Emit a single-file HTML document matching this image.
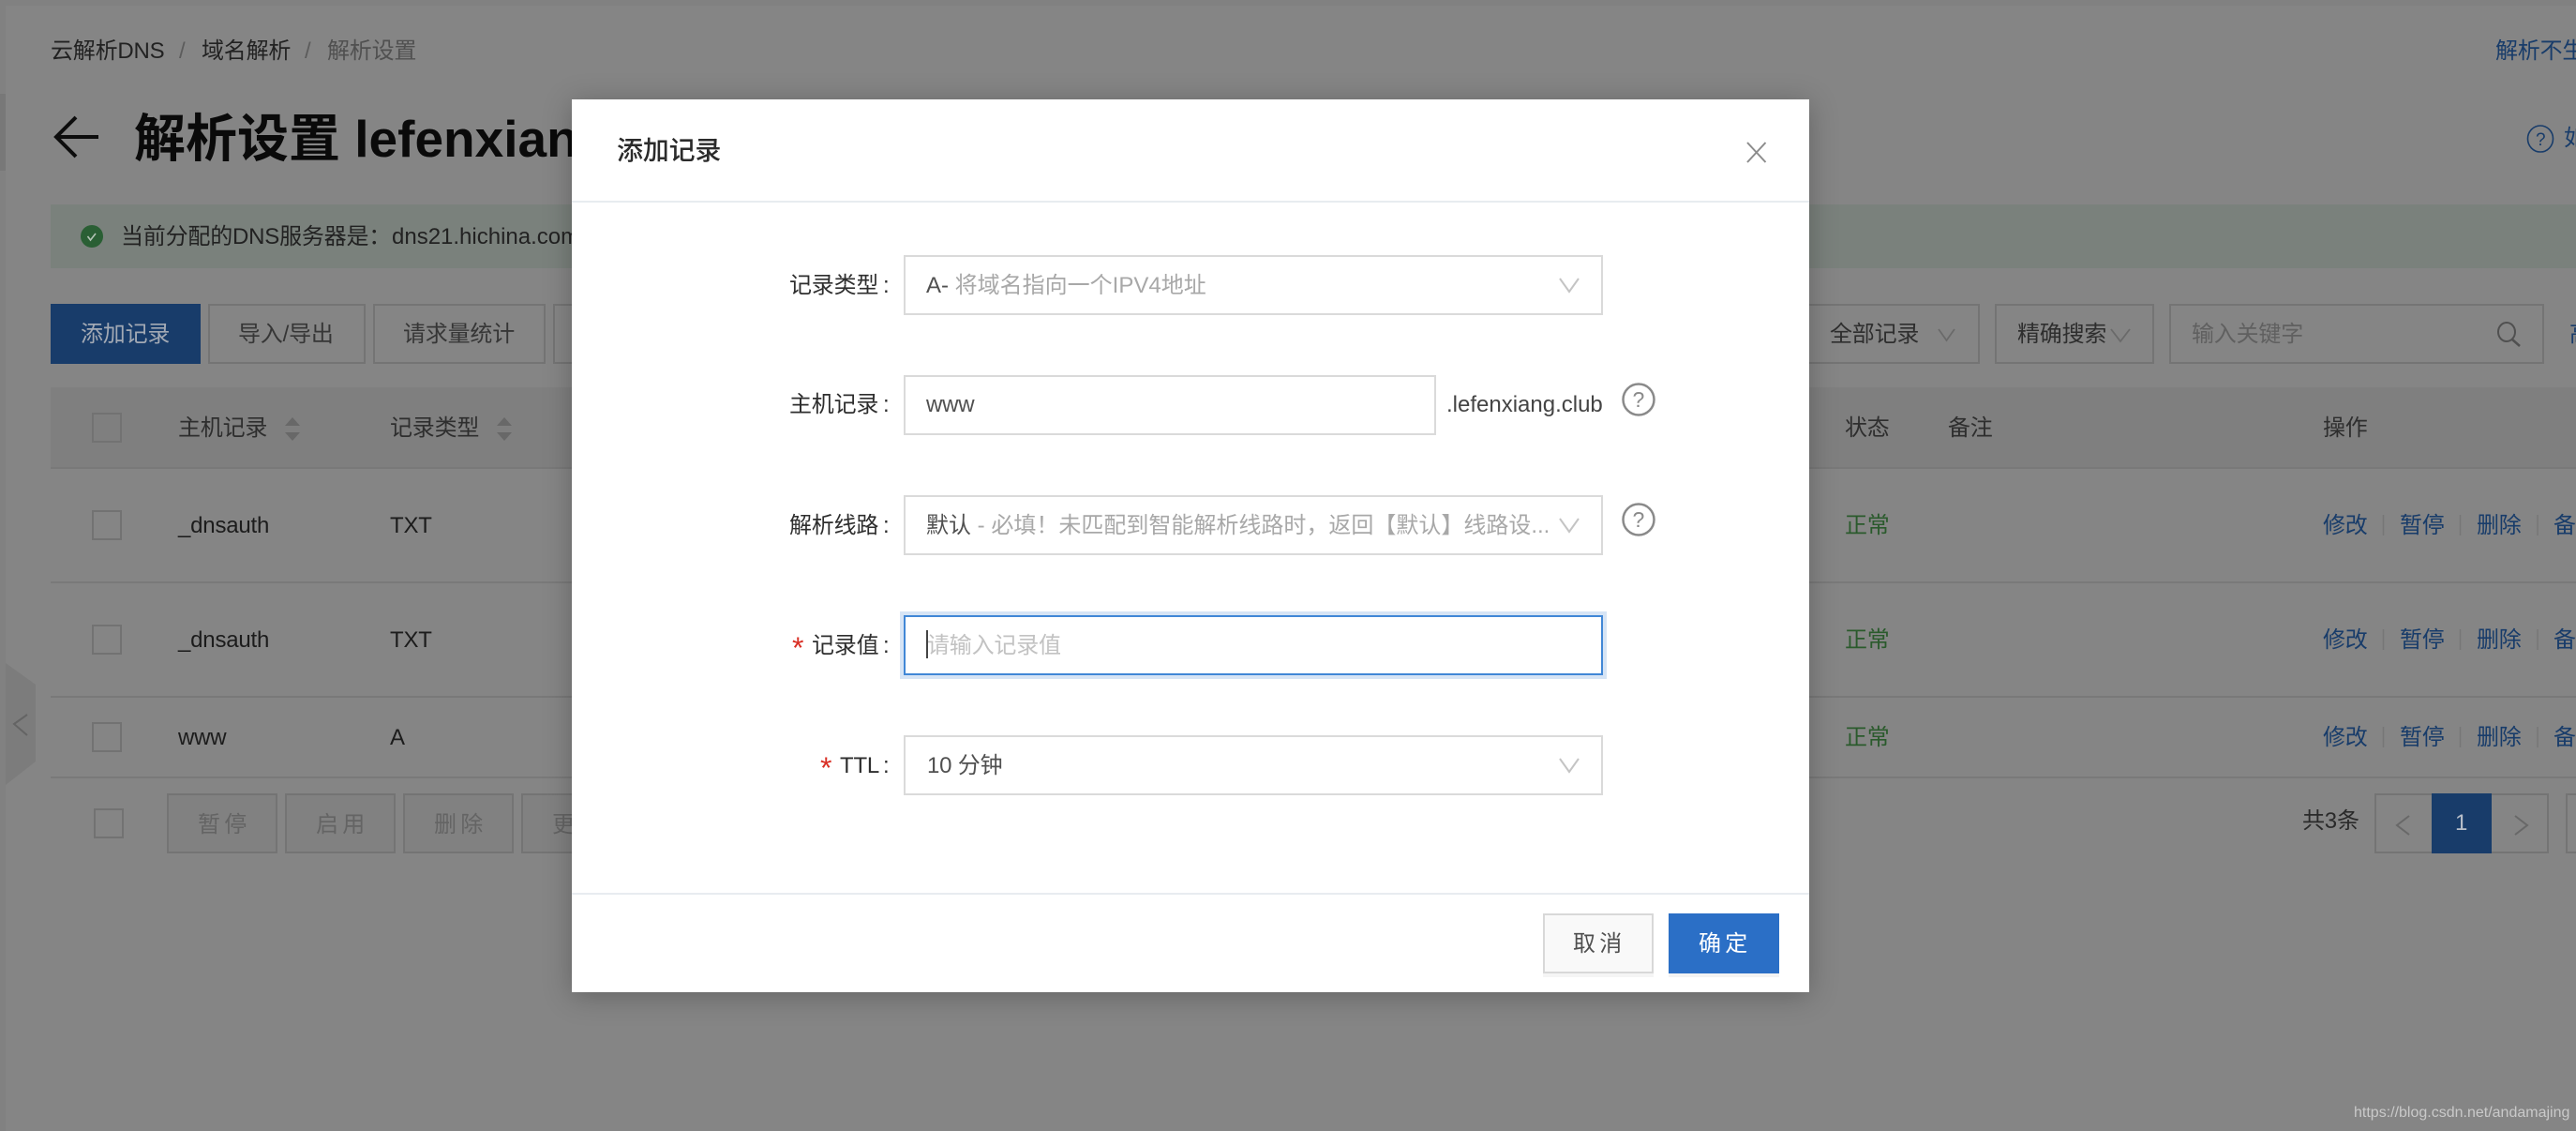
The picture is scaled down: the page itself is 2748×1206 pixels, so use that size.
<!DOCTYPE html>
<html lang="zh-CN">
<head>
<meta charset="utf-8">
<title>添加记录</title>
<style>
html,body{margin:0;padding:0;width:2748px;height:1206px;overflow:hidden;background:#858585;}
body{position:relative;font-family:"Liberation Sans","Noto Sans CJK SC",sans-serif;font-size:24px;color:#1f1f1f;}
.b{position:absolute;box-sizing:border-box;}
.t{position:absolute;white-space:nowrap;line-height:40px;height:40px;margin-top:2px;letter-spacing:-.2px;}
.btn{border:2px solid #747474;}
.cb{border:2px solid #727272;width:32px;height:32px;}
.line{position:absolute;left:54px;width:2694px;height:2px;background:#797979;}
.g{color:#2a5a2c}
.l{color:#183c6a}
.m{border:2px solid #dadada;background:#fff;height:64px;}
.gr{color:#a8a8a8}
.dk{color:#505050}
.lab{color:#2e2e2e}
.star{color:#d93026;font-size:32px}
.z{letter-spacing:0}
svg{position:absolute;left:0;top:0;}
</style>
</head>
<body>
<!-- page chrome -->
<div class="b" style="left:0;top:0;width:2748px;height:6px;background:#818181"></div>
<div class="b" style="left:0;top:0;width:6px;height:1206px;background:#818181"></div>
<div class="b" style="left:0;top:100px;width:6px;height:82px;background:#787878"></div>

<!-- breadcrumb -->
<div class="t" style="left:54px;top:33px;color:#222">云解析DNS</div>
<div class="t" style="left:191px;top:33px;color:#5c5c5c">/</div>
<div class="t" style="left:215px;top:33px;color:#222">域名解析</div>
<div class="t" style="left:325px;top:33px;color:#5c5c5c">/</div>
<div class="t" style="left:349px;top:33px;color:#505050">解析设置</div>
<div class="t l" style="left:2662px;top:33px">解析不生效</div>

<!-- title -->
<div class="t z" style="left:143px;top:114px;height:64px;line-height:64px;font-size:55px;font-weight:700;color:#0a0a0a">解析设置 lefenxiang.club</div>
<div class="t l" style="left:2735px;top:126px">如何设置</div>

<!-- alert -->
<div class="b" style="left:54px;top:218px;width:2694px;height:68px;background:#7a817c"></div>
<div class="t" style="left:129px;top:231px;color:#222">当前分配的DNS服务器是：</div>
<div class="t z" style="left:418px;top:231px;color:#222">dns21.hichina.com</div>

<!-- toolbar -->
<div class="b" style="left:54px;top:324px;width:160px;height:64px;background:#183c6a"></div>
<div class="t" style="left:86px;top:335px;color:#a2a9b4">添加记录</div>
<div class="b btn" style="left:222px;top:324px;width:168px;height:64px"></div>
<div class="t" style="left:254px;top:335px;color:#363636">导入/导出</div>
<div class="b btn" style="left:398px;top:324px;width:184px;height:64px"></div>
<div class="t" style="left:430px;top:335px;color:#363636">请求量统计</div>
<div class="b btn" style="left:590px;top:324px;width:120px;height:64px"></div>

<div class="b btn" style="left:1900px;top:324px;width:212px;height:64px"></div>
<div class="t" style="left:1952px;top:335px;color:#2e2e2e">全部记录</div>
<div class="b btn" style="left:2128px;top:324px;width:170px;height:64px"></div>
<div class="t" style="left:2152px;top:335px;color:#2e2e2e">精确搜索</div>
<div class="b btn" style="left:2314px;top:324px;width:400px;height:64px"></div>
<div class="t" style="left:2338px;top:335px;color:#606060">输入关键字</div>
<div class="t l" style="left:2741px;top:335px">高级</div>

<!-- table -->
<div class="b" style="left:54px;top:413px;width:2694px;height:86px;background:#7f7f7f"></div>
<div class="line" style="top:498px"></div>
<div class="line" style="top:620px"></div>
<div class="line" style="top:742px"></div>
<div class="line" style="top:828px"></div>

<div class="b cb" style="left:98px;top:440px"></div>
<div class="t" style="left:190px;top:435px;color:#2e2e2e">主机记录</div>
<div class="t" style="left:416px;top:435px;color:#2e2e2e">记录类型</div>
<div class="t" style="left:1968px;top:435px;color:#2e2e2e">状态</div>
<div class="t" style="left:2078px;top:435px;color:#2e2e2e">备注</div>
<div class="t" style="left:2478px;top:435px;color:#2e2e2e">操作</div>

<div class="b cb" style="left:98px;top:544px"></div>
<div class="t" style="left:190px;top:539px;color:#1c1c1c">_dnsauth</div>
<div class="t" style="left:416px;top:539px;color:#1c1c1c">TXT</div>
<div class="t g" style="left:1968px;top:539px">正常</div>
<div class="t l" style="left:2478px;top:539px">修改</div>
<div class="t l" style="left:2560px;top:539px">暂停</div>
<div class="t l" style="left:2642px;top:539px">删除</div>
<div class="t l" style="left:2724px;top:539px">备注</div>

<div class="b cb" style="left:98px;top:666px"></div>
<div class="t" style="left:190px;top:661px;color:#1c1c1c">_dnsauth</div>
<div class="t" style="left:416px;top:661px;color:#1c1c1c">TXT</div>
<div class="t g" style="left:1968px;top:661px">正常</div>
<div class="t l" style="left:2478px;top:661px">修改</div>
<div class="t l" style="left:2560px;top:661px">暂停</div>
<div class="t l" style="left:2642px;top:661px">删除</div>
<div class="t l" style="left:2724px;top:661px">备注</div>

<div class="b cb" style="left:98px;top:770px"></div>
<div class="t" style="left:190px;top:765px;color:#1c1c1c">www</div>
<div class="t" style="left:416px;top:765px;color:#1c1c1c">A</div>
<div class="t g" style="left:1968px;top:765px">正常</div>
<div class="t l" style="left:2478px;top:765px">修改</div>
<div class="t l" style="left:2560px;top:765px">暂停</div>
<div class="t l" style="left:2642px;top:765px">删除</div>
<div class="t l" style="left:2724px;top:765px">备注</div>

<!-- table footer -->
<div class="b cb" style="left:100px;top:862px"></div>
<div class="b btn" style="left:178px;top:846px;width:118px;height:64px;background:#818181"></div>
<div class="t" style="left:211px;top:858px;color:#646464;word-spacing:-2px">暂 停</div>
<div class="b btn" style="left:304px;top:846px;width:118px;height:64px;background:#818181"></div>
<div class="t" style="left:337px;top:858px;color:#646464;word-spacing:-2px">启 用</div>
<div class="b btn" style="left:430px;top:846px;width:118px;height:64px;background:#818181"></div>
<div class="t" style="left:463px;top:858px;color:#646464;word-spacing:-2px">删 除</div>
<div class="b btn" style="left:556px;top:846px;width:118px;height:64px;background:#818181"></div>
<div class="t" style="left:589px;top:858px;color:#646464">更</div>

<div class="t" style="left:2456px;top:854px;color:#2a2a2a;font-size:24px">共3条</div>
<div class="b btn" style="left:2533px;top:846px;width:186px;height:64px"></div>
<div class="b" style="left:2594px;top:846px;width:64px;height:64px;background:#183c6a"></div>
<div class="t" style="left:2619px;top:856px;color:#b8bfca">1</div>
<div class="b btn" style="left:2737px;top:846px;width:60px;height:64px"></div>

<!-- page icons -->
<svg width="2748" height="1206" viewBox="0 0 2748 1206" fill="none">
  <path d="M105 146H61M81 125L60 146 81 167" stroke="#0d0d0d" stroke-width="4" fill="none"/>
  <circle cx="98" cy="252" r="12" fill="#2a5f34"/>
  <path d="M93.500 252l3 4 5.500-7" stroke="#b4c4b6" stroke-width="1.600"/>
  <path d="M304 454l8-9 8 9zM304 461l8 9 8-9z" fill="#686868"/>
  <path d="M530 454l8-9 8 9zM530 461l8 9 8-9z" fill="#686868"/>
  <path d="M2068 351l8.500 12 8.500-12M2252 351l10 13 10-13" stroke="#6a6a6a" stroke-width="1.800"/>
  <ellipse cx="2674" cy="354" rx="9" ry="10" stroke="#505050" stroke-width="2"/>
  <path d="M2680 362l8 7" stroke="#505050" stroke-width="2.500"/>
  <ellipse cx="2710" cy="148" rx="13.500" ry="14" stroke="#183c6a" stroke-width="1.600"/>
  <text x="2705" y="155" font-size="19" fill="#183c6a" font-family="Liberation Sans">?</text>
  <path d="M6 707L38 730V812L6 837Z" fill="#7c7c7c"/>
  <path d="M29 762L15 772 29 784" stroke="#646464" stroke-width="2"/>
  <path d="M2570 870l-13 10 13 10M2683 870l13 10-13 10" stroke="#686868" stroke-width="2"/>
  <path d="M2542.500 549v22M2624.500 549v22M2707 549v22M2542.500 671v22M2624.500 671v22M2707 671v22M2542.500 775v22M2624.500 775v22M2707 775v22" stroke="#767676" stroke-width="1.500"/>
</svg>

<!-- watermark -->
<div class="t z" style="left:2511px;top:1165px;font-size:16px;color:#c9c9c9">https://blog.csdn.net/andamajing</div>

<!-- modal -->
<div class="b" style="left:610px;top:106px;width:1320px;height:952px;background:#fff;box-shadow:0 4px 28px rgba(0,0,0,.26)"></div>
<div class="b" style="left:610px;top:214px;width:1320px;height:2px;background:#e8ecf0"></div>
<div class="b" style="left:610px;top:952px;width:1320px;height:2px;background:#e8ecf0"></div>
<div class="t" style="left:658px;top:139px;font-size:28px;font-weight:500;color:#2b2b2b">添加记录</div>

<!-- row 1 -->
<div class="t lab" style="left:842px;top:283px">记录类型</div>
<div class="t lab" style="left:942px;top:283px">:</div>
<div class="b m" style="left:964px;top:272px;width:746px"></div>
<div class="t z" style="left:988px;top:283px"><span class="dk">A- </span><span class="gr">将域名指向一个IPV4地址</span></div>

<!-- row 2 -->
<div class="t lab" style="left:842px;top:410px">主机记录</div>
<div class="t lab" style="left:942px;top:410px">:</div>
<div class="b m" style="left:964px;top:400px;width:568px"></div>
<div class="t dk" style="left:988px;top:410px">www</div>
<div class="t z" style="left:1543px;top:410px;color:#444">.lefenxiang.club</div>

<!-- row 3 -->
<div class="t lab" style="left:842px;top:539px">解析线路</div>
<div class="t lab" style="left:942px;top:539px">:</div>
<div class="b m" style="left:964px;top:528px;width:746px"></div>
<div class="t z" style="left:988px;top:539px"><span class="dk">默认</span><span class="gr"> - 必填！未匹配到智能解析线路时，返回【默认】线路设...</span></div>

<!-- row 4 -->
<div class="t star" style="left:845px;top:669px">*</div>
<div class="t lab" style="left:866px;top:667px">记录值</div>
<div class="t lab" style="left:942px;top:667px">:</div>
<div class="b" style="left:964px;top:656px;width:746px;height:64px;border:2px solid #4187d6;background:#fff;box-shadow:0 0 0 4px #d6e4f5"></div>
<div class="t" style="left:989px;top:667px;color:#c2c2c2">请输入记录值</div>
<div class="b" style="left:988px;top:672px;width:2px;height:30px;background:#444"></div>

<!-- row 5 -->
<div class="t star" style="left:875px;top:797px">*</div>
<div class="t lab" style="left:896px;top:795px">TTL</div>
<div class="t lab" style="left:942px;top:795px">:</div>
<div class="b m" style="left:964px;top:784px;width:746px"></div>
<div class="t dk" style="left:989px;top:795px">10 分钟</div>

<!-- footer -->
<div class="b" style="left:1646px;top:974px;width:118px;height:68px;background:#f5f5f5"></div>
<div class="b" style="left:1646px;top:974px;width:118px;height:64px;background:#f9f9f9;border:2px solid #d8d8d8"></div>
<div class="t dk" style="left:1678px;top:985px;word-spacing:-2px">取 消</div>
<div class="b" style="left:1780px;top:974px;width:118px;height:68px;background:#f3f3f3"></div>
<div class="b" style="left:1780px;top:974px;width:118px;height:64px;background:#2b6fc6"></div>
<div class="t" style="left:1812px;top:985px;color:#fff;word-spacing:-2px">确 定</div>

<!-- modal icons -->
<svg width="2748" height="1206" viewBox="0 0 2748 1206" fill="none">
  <path d="M1864 152l19.500 21M1883.500 152L1864 173" stroke="#8c8c8c" stroke-width="2"/>
  <path d="M1664 297l10 14 10-14M1664 553l10 14 10-14M1664 809l10 14 10-14" stroke="#c4c4c4" stroke-width="2"/>
  <circle cx="1748" cy="426" r="16.500" stroke="#8a8a8a" stroke-width="2.500"/>
  <circle cx="1748" cy="554" r="16.500" stroke="#8a8a8a" stroke-width="2.500"/>
  <text x="1741.500" y="434" font-size="23" fill="#8a8a8a" font-family="Liberation Sans">?</text>
  <text x="1741.500" y="562" font-size="23" fill="#8a8a8a" font-family="Liberation Sans">?</text>
</svg>
</body>
</html>
